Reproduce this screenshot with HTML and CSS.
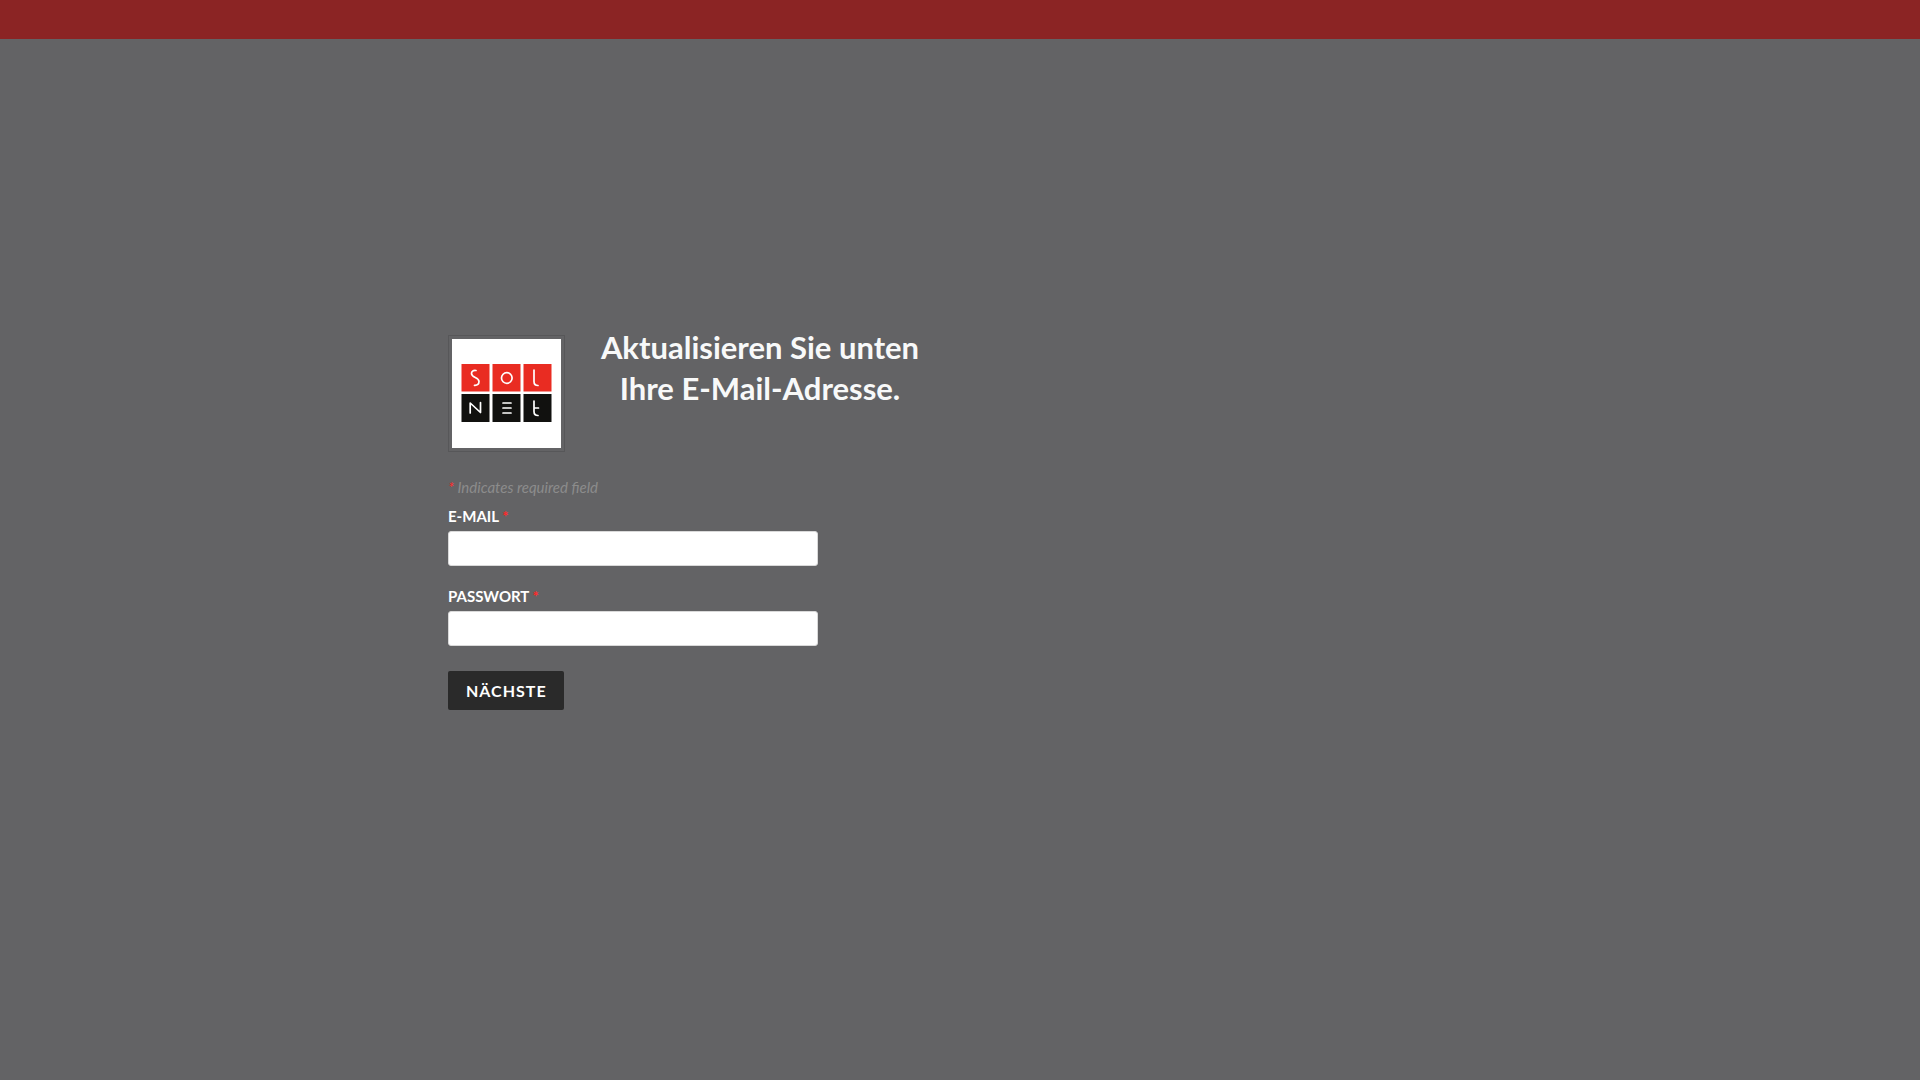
FILE: index.html
```
<!DOCTYPE html>
<html lang="de">
<head>
<meta charset="utf-8">
<meta name="viewport" content="width=device-width, initial-scale=1">
<title>Solnet</title>
<link rel="stylesheet" href="styles.css">
</head>
<body>
<header class="topbar"></header>
<main class="content">
  <div class="intro">
    <div class="logo">
      <svg viewBox="0 0 109 109" role="img" aria-label="Solnet">
        <rect width="109" height="109" fill="#fff"/>
        <g fill="#e92c22">
          <rect x="9.500" y="25" width="28" height="27.500"/>
          <rect x="40.500" y="25" width="28" height="27.500"/>
          <rect x="71.500" y="25" width="28" height="27.500"/>
        </g>
        <g fill="#11110f">
          <rect x="9.500" y="55" width="28" height="28"/>
          <rect x="40.500" y="55" width="28" height="28"/>
          <rect x="71.500" y="55" width="28" height="28"/>
        </g>
        <g fill="none" stroke="#fff" stroke-width="1.7" stroke-linecap="round" stroke-linejoin="round">
          <path d="M24 31.5C21 31 19.500 32.500 19.500 34.500C19.500 39 27 38 27 42.500C27 45 25.500 46.500 22.500 46.300"/>
          <circle cx="54.800" cy="39" r="5.300"/>
          <path d="M82 31V42.500C82 45.200 83.500 46.500 86 46.500"/>
          <path d="M18.200 74V64L28.500 73.500V63.500"/>
          <path d="M51 64H59M51 69H59M51 74H59"/>
          <path d="M82 62V72.500C82 75.300 83.500 76.500 86 76.500M82 69H86.500"/>
        </g>
      </svg>
    </div>
    <h1 class="title">Aktualisieren Sie unten<br>Ihre E-Mail-Adresse.</h1>
  </div>
  <form class="form">
    <p class="note"><span class="star">*</span> Indicates required field</p>
    <div class="field">
      <label class="label" for="email">E-MAIL <span class="star">*</span></label>
      <input class="input" id="email" name="email" type="text">
    </div>
    <div class="field">
      <label class="label" for="password">PASSWORT <span class="star">*</span></label>
      <input class="input" id="password" name="password" type="password">
    </div>
    <button class="button" type="button">NÄCHSTE</button>
  </form>
</main>
</body>
</html>
```
FILE: styles.css
```
* {
  box-sizing: border-box;
}

body {
  margin: 0;
  background: #636365;
  color: #fff;
  font-family: Lato, "Liberation Sans", sans-serif;
}

.topbar {
  height: 39px;
  background: #8b2424;
}

.content {
  max-width: 1024px;
  margin: 0 auto;
  padding-top: 288px;
}

.intro {
  display: flex;
  gap: 30px;
}

.logo {
  flex: none;
  width: 117px;
  margin-top: 8px;
  padding: 3px;
  border: 1px solid #575759;
}

.logo svg {
  display: block;
  width: 100%;
}

.title {
  width: 330px;
  margin: 0;
  color: #f8f9f9;
  font-size: 31px;
  font-weight: 700;
  line-height: 41px;
  text-align: center;
  white-space: nowrap;
}

.form {
  max-width: 370px;
  margin-top: 23px;
}

.note {
  margin: 0 0 1px;
  color: #8c8c8c;
  font-size: 15px;
  font-style: italic;
  line-height: 24px;
}

.star {
  color: #ff2a2a;
}

.field {
  margin-bottom: 14px;
}

.label {
  display: block;
  padding: 6px 0 5px;
  font-size: 15px;
  font-weight: 700;
  line-height: 20px;
}

.input {
  display: block;
  width: 100%;
  height: 35px;
  padding: 0 8px;
  border: 1px solid #d9d9d9;
  border-radius: 3px;
  background: #fff;
  font: inherit;
}

.button {
  height: 39px;
  margin-top: 11px;
  padding: 0 17px 0 18px;
  border: 0;
  border-radius: 2px;
  background: #2a2a2a;
  color: #fff;
  font-family: inherit;
  font-size: 16px;
  font-weight: 700;
  letter-spacing: 1px;
}
```
